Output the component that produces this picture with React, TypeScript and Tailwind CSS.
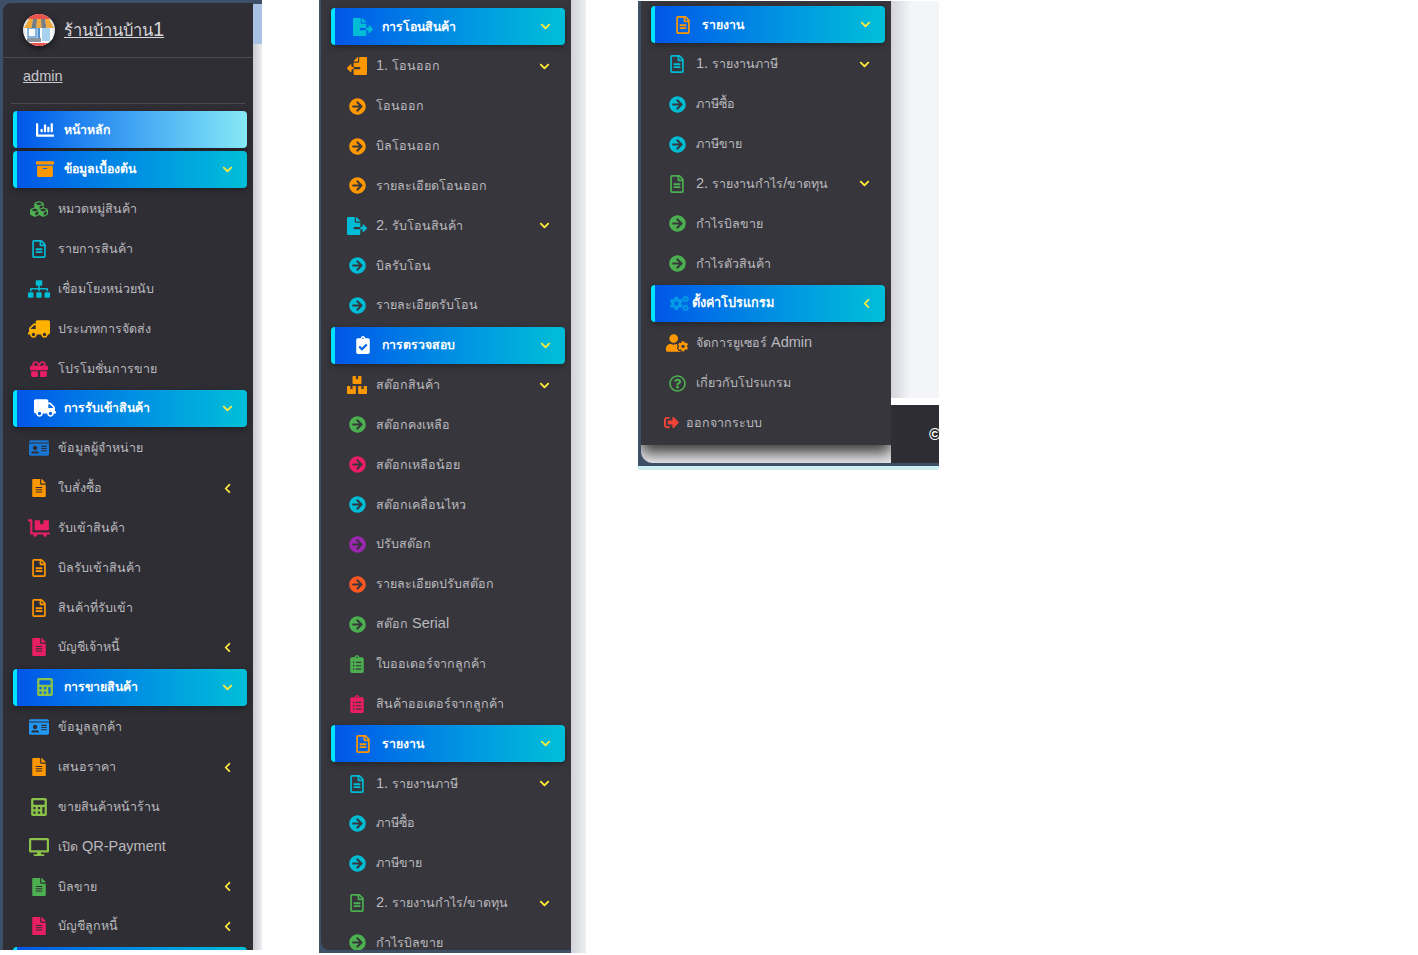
import type { IconType } from 'react-icons';
import {
  FaArchive,
  FaArrowCircleRight,
  FaBoxes,
  FaCalculator,
  FaChartBar,
  FaChevronDown,
  FaChevronLeft,
  FaClipboardCheck,
  FaClipboardList,
  FaCogs,
  FaCubes,
  FaDesktop,
  FaDollyFlatbed,
  FaFileAlt,
  FaFileExport,
  FaGift,
  FaIdCard,
  FaRegFileAlt,
  FaRegQuestionCircle,
  FaSignOutAlt,
  FaSitemap,
  FaTruck,
  FaUserCog,
} from 'react-icons/fa';

type Item = {
  label: string;
  icon: IconType;
  color: string;
  size?: string;
  active?: boolean;
  home?: boolean;
  chevron?: 'down' | 'left';
  flip?: boolean;
  left?: string;
  textLeft?: string;
  thaiSize?: string;
};

const ORANGE = 'text-[#ff9800]';
const CYAN = 'text-[#00bcd4]';
const GREEN = 'text-[#4caf50]';
const PINK = 'text-[#e91e63]';
const LIME = 'text-[#8bc34a]';
const BLUE = 'text-[#2196f3]';
const WHITE = 'text-white';

const arrow = (label: string, color: string): Item => ({ label, icon: FaArrowCircleRight, color });
const file = (label: string, color: string, chevron?: 'left'): Item => ({ label, icon: FaFileAlt, color, chevron });
const outline = (label: string, color: string): Item => ({ label, icon: FaRegFileAlt, color });

const reportItems: Item[] = [
  { label: 'รายงาน', icon: FaRegFileAlt, color: ORANGE, active: true, chevron: 'down' },
  { ...outline('1. รายงานภาษี', CYAN), chevron: 'down' },
  arrow('ภาษีซื้อ', CYAN),
  arrow('ภาษีขาย', CYAN),
  { ...outline('2. รายงานกำไร/ขาดทุน', GREEN), chevron: 'down' },
  arrow('กำไรบิลขาย', GREEN),
];

const firstMenu: Item[] = [
  { label: 'หน้าหลัก', icon: FaChartBar, color: WHITE, active: true, home: true },
  { label: 'ข้อมูลเบื้องต้น', icon: FaArchive, color: ORANGE, active: true, chevron: 'down' },
  { label: 'หมวดหมู่สินค้า', icon: FaCubes, color: GREEN },
  outline('รายการสินค้า', CYAN),
  { label: 'เชื่อมโยงหน่วยนับ', icon: FaSitemap, color: CYAN, size: 'text-[22px]' },
  { label: 'ประเภทการจัดส่ง', icon: FaTruck, color: 'text-[#ffb300]', size: 'text-[22px]', flip: true },
  { label: 'โปรโมชั่นการขาย', icon: FaGift, color: PINK },
  { label: 'การรับเข้าสินค้า', icon: FaTruck, color: WHITE, size: 'text-[22px]', active: true, chevron: 'down' },
  { label: 'ข้อมูลผู้จำหน่าย', icon: FaIdCard, color: 'text-[#1976d2]', size: 'text-[20px]' },
  file('ใบสั่งซื้อ', ORANGE, 'left'),
  { label: 'รับเข้าสินค้า', icon: FaDollyFlatbed, color: PINK, size: 'text-[22px]' },
  outline('บิลรับเข้าสินค้า', ORANGE),
  outline('สินค้าที่รับเข้า', ORANGE),
  file('บัญชีเจ้าหนี้', PINK, 'left'),
  { label: 'การขายสินค้า', icon: FaCalculator, color: LIME, active: true, chevron: 'down' },
  { label: 'ข้อมูลลูกค้า', icon: FaIdCard, color: BLUE, size: 'text-[20px]' },
  file('เสนอราคา', ORANGE, 'left'),
  { label: 'ขายสินค้าหน้าร้าน', icon: FaCalculator, color: LIME },
  { label: 'เปิด QR-Payment', icon: FaDesktop, color: LIME, size: 'text-[20px]' },
  file('บิลขาย', GREEN, 'left'),
  file('บัญชีลูกหนี้', PINK, 'left'),
];

const secondMenu: Item[] = [
  { label: 'การโอนสินค้า', icon: FaFileExport, color: CYAN, size: 'text-[20px]', active: true, chevron: 'down' },
  { label: '1. โอนออก', icon: FaFileExport, color: ORANGE, size: 'text-[20px]', flip: true, chevron: 'down' },
  arrow('โอนออก', ORANGE),
  arrow('บิลโอนออก', ORANGE),
  arrow('รายละเอียดโอนออก', ORANGE),
  { label: '2. รับโอนสินค้า', icon: FaFileExport, color: CYAN, size: 'text-[20px]', chevron: 'down' },
  arrow('บิลรับโอน', CYAN),
  arrow('รายละเอียดรับโอน', CYAN),
  { label: 'การตรวจสอบ', icon: FaClipboardCheck, color: WHITE, active: true, chevron: 'down' },
  { label: 'สต๊อกสินค้า', icon: FaBoxes, color: ORANGE, size: 'text-[20px]', chevron: 'down' },
  arrow('สต๊อกคงเหลือ', GREEN),
  arrow('สต๊อกเหลือน้อย', PINK),
  arrow('สต๊อกเคลื่อนไหว', CYAN),
  arrow('ปรับสต๊อก', 'text-[#9c27b0]'),
  arrow('รายละเอียดปรับสต๊อก', 'text-[#ff5722]'),
  arrow('สต๊อก Serial', GREEN),
  { label: 'ใบออเดอร์จากลูกค้า', icon: FaClipboardList, color: GREEN },
  { label: 'สินค้าออเดอร์จากลูกค้า', icon: FaClipboardList, color: PINK },
  ...reportItems,
];

const thirdMenu: Item[] = [
  ...reportItems,
  arrow('กำไรตัวสินค้า', GREEN),
  {
    label: 'ตั้งค่าโปรแกรม',
    icon: FaCogs,
    color: 'text-[#039be5]',
    size: 'text-[19px]',
    active: true,
    chevron: 'left',
    left: 'left-[9px]',
    textLeft: 'pl-[37px]',
    thaiSize: 'text-[12.700px]',
  },
  { label: 'จัดการยูเซอร์ Admin', icon: FaUserCog, color: ORANGE, size: 'text-[22px]' },
  { label: 'เกี่ยวกับโปรแกรม', icon: FaRegQuestionCircle, color: GREEN, size: 'text-[17px]' },
  { label: 'ออกจากระบบ', icon: FaSignOutAlt, color: 'text-[#f44336]', size: 'text-[15px]', left: 'left-[15px]', textLeft: 'pl-[45px]' },
];

// Thai glyphs run wide in the fallback font, latin and digits don't, so the two get their own size
function Label({ text, thai, latin }: { text: string; thai: string; latin: string }) {
  return (
    <>
      {text.split(/([\u0E00-\u0E7F]+)/).map((part, i) =>
        part === '' ? null : (
          <span key={i} className={/[\u0E00-\u0E7F]/.test(part) ? thai : latin}>
            {part}
          </span>
        )
      )}
    </>
  );
}

function Row({ item }: { item: Item }) {
  const Icon = item.icon;
  const iconEl = (
    <span className={`absolute top-0 bottom-0 flex w-[30px] items-center justify-center ${item.left ?? (item.active ? 'left-[12.5px]' : 'left-[21px]')}`}>
      <Icon className={`${item.color} ${item.size ?? (item.icon === FaArrowCircleRight ? 'text-[17px]' : 'text-[18px]')} ${item.flip ? '-scale-x-100' : ''}`} />
    </span>
  );

  if (item.active) {
    return (
      <div className="flex h-[39.85px] items-center pl-[10px] pr-[6px]">
        <div
          className={`relative flex h-[37px] w-full items-center rounded border-l-4 border-[#00e5ff] shadow-[0_2px_6px_rgba(0,0,0,0.35)] ${
            item.home ? 'bg-gradient-to-r from-[#0055e8] to-[#86e9f6]' : 'bg-gradient-to-r from-[#0055e8] to-[#00bfd8]'
          }`}
        >
          {iconEl}
          <span className={`pb-[2px] font-bold text-white ${item.textLeft ?? 'pl-[47px]'}`}>
            <Label text={item.label} thai={item.thaiSize ?? 'text-[12.3px]'} latin="text-[13px]" />
          </span>
          {item.chevron === 'down' && <FaChevronDown className="absolute right-[14px] text-[11px] text-[#ffeb3b]" />}
          {item.chevron === 'left' && <FaChevronLeft className="absolute right-[13px] text-[11px] text-[#ffeb3b]" />}
        </div>
      </div>
    );
  }

  return (
    <div className="relative flex h-[39.85px] items-center">
      {iconEl}
      <span className={`pb-[2px] text-[#b9b9bd] ${item.textLeft ?? 'pl-[55px]'}`}>
        <Label text={item.label} thai="text-[12.500px]" latin="text-[14.500px]" />
      </span>
      {item.chevron === 'down' && <FaChevronDown className="absolute left-[218px] text-[11px] text-[#ffeb3b]" />}
      {item.chevron === 'left' && <FaChevronLeft className="absolute left-[218.5px] text-[11px] text-[#ffeb3b]" />}
    </div>
  );
}

function ShopLogo() {
  return (
    <svg viewBox="0 0 32 32" className="h-8 w-8 shrink-0 drop-shadow-[0_2px_3px_rgba(0,0,0,0.6)]">
      <defs>
        <clipPath id="shop-round">
          <circle cx="16" cy="16" r="16" />
        </clipPath>
      </defs>
      <g clipPath="url(#shop-round)">
        <rect width="32" height="32" fill="#e6e9ec" />
        <rect width="32" height="5" fill="#e8534e" />
        <rect y="29" width="32" height="3" fill="#e8534e" />
        <rect x="2" y="13" width="28" height="16" fill="#f7f8f9" />
        <rect x="5" y="14" width="8" height="9" fill="none" stroke="#4f93cf" strokeWidth="1.3" />
        <rect x="14.500" y="12" width="2.500" height="12" fill="#4f93cf" />
        <rect x="19" y="14" width="8" height="13" fill="#a7d3ef" />
        <rect x="4" y="24" width="14" height="4" fill="#8d949b" />
        <path d="M6 5h4l-1.500 9H1z" fill="#f2a93b" />
        <path d="M10 5h4l-.5 9H8.500z" fill="#767c84" />
        <path d="M14 5h4l.5 9h-5z" fill="#f2a93b" />
        <path d="M18 5h4l1.500 9h-5z" fill="#767c84" />
        <path d="M22 5h4l5 9h-7.500z" fill="#f2a93b" />
      </g>
    </svg>
  );
}

export default function App() {
  return (
    <div className="flex h-[955px] w-[1418px] items-start overflow-hidden bg-white font-['Liberation_Sans',Tahoma,sans-serif]">
      {/* first capture: top of the menu */}
      <section className="flex h-[950px] w-[262px] shrink-0 overflow-hidden bg-[#3e5068]">
        <div className="mt-[3px] ml-[3px] h-[947px] w-[250px] shrink-0 overflow-hidden rounded-tl-lg bg-[#2f2e35]">
          <div className="flex h-[55px] items-center gap-[9px] border-b border-[#4a4a50] pl-[20px]">
            <ShopLogo />
            <span className="pb-[2px] text-[#d8d8da] underline">
              <Label text="ร้านบ้านบ้าน1" thai="text-[16.5px]" latin="text-[20px]" />
            </span>
          </div>
          <div className="mx-[8px] flex h-[46px] items-center border-b border-[#4a4a50] pb-[7px] pl-[12px]">
            <span className="text-[14.500px] text-[#c8c8cc] underline">admin</span>
          </div>
          <div className="pt-[5.600px]">
            {firstMenu.map((item, i) => (
              <Row key={i} item={item} />
            ))}
            {/* next group's button, only its top edge is in the capture */}
            <div className="mt-[1px] ml-[10px] mr-[6px] h-[37px] rounded border-l-4 border-[#00e5ff] bg-gradient-to-r from-[#0055e8] to-[#00bfd8]" />
          </div>
        </div>
        <div className="mt-[3.500px] flex w-[9px] flex-col">
          <div className="h-[40px] bg-[#a9c2e4]" />
          <div className="flex-1 bg-gradient-to-r from-[#c9cad0] to-[#eceef2]" />
        </div>
      </section>

      {/* second capture: middle of the menu */}
      <section className="ml-[57px] flex h-[953px] w-[267px] shrink-0 overflow-hidden bg-[#3e5068]">
        <div className="ml-[2px] h-[950px] w-[250px] shrink-0 overflow-hidden rounded-bl-lg bg-[#37363c] pt-[6.600px]">
          {secondMenu.map((item, i) => (
            <Row key={i} item={item} />
          ))}
        </div>
        <div className="h-[953px] w-[15px] bg-gradient-to-r from-[#d2d3d8] to-[#eceef2]" />
      </section>

      {/* third capture: end of the menu */}
      <section className="mt-[1px] ml-[52px] flex h-[469px] w-[301px] shrink-0 flex-col overflow-hidden">
        <div className="flex h-[465px] bg-[#3e5068]">
          <div className="ml-[3px] flex h-[462px] w-[250px] shrink-0 flex-col overflow-hidden rounded-bl-xl bg-[#e9e9eb]">
            <div className="h-[444px] shrink-0 bg-[#37363c] pt-[3.600px] shadow-[0_8px_14px_rgba(0,0,0,0.75)]">
              {thirdMenu.map((item, i) => (
                <Row key={i} item={item} />
              ))}
            </div>
          </div>
          <div className="flex h-[462px] w-[48px] flex-col">
            <div className="h-[397px] bg-gradient-to-r from-[#d3d4da] from-0% via-[#f3f5f9] via-40% to-[#f3f5f9]" />
            <div className="h-[7px] bg-white" />
            <div className="flex flex-1 items-center overflow-hidden bg-[#2e2d33] pl-[38px] pt-[1px]">
              <span className="text-[16px] font-bold text-white">©</span>
            </div>
          </div>
        </div>
        <div className="h-[4px] bg-[#cfeef0]" />
      </section>
    </div>
  );
}
